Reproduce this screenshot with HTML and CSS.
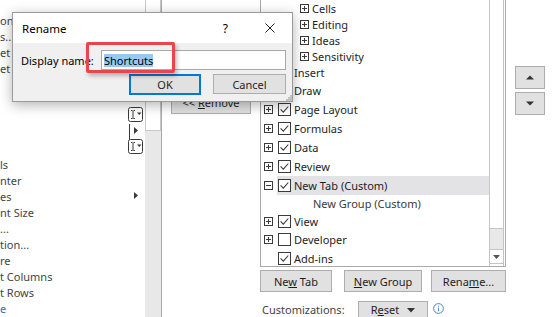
FILE: index.html
```html
<!DOCTYPE html>
<html lang="en">
<head>
  <meta charset="UTF-8">
  <meta name="viewport" content="width=device-width, initial-scale=1.0">
  <title>Customize the Ribbon - Rename</title>
  <link rel="stylesheet" href="styles.css">
</head>
<body>

  <svg class="defs" xmlns="http://www.w3.org/2000/svg">
    <symbol id="plus" viewBox="0 0 9 9">
      <rect x=".5" y=".5" width="8" height="8" fill="#fff" stroke="#3a3a3a"/>
      <path d="M2 4.5h5M4.5 2v5" stroke="#3a3a3a"/>
    </symbol>
    <symbol id="minus" viewBox="0 0 9 9">
      <rect x=".5" y=".5" width="8" height="8" fill="#fff" stroke="#3a3a3a"/>
      <path d="M2 4.5h5" stroke="#3a3a3a"/>
    </symbol>
    <symbol id="cb-on" viewBox="0 0 13 13">
      <rect x=".5" y=".5" width="12" height="12" fill="#fff" stroke="#3a3a3a"/>
      <path d="M2.6 6.4l2.7 2.8 5-5.7" fill="none" stroke="#3a3a3a" stroke-width="1.1"/>
    </symbol>
    <symbol id="cb-off" viewBox="0 0 13 13">
      <rect x=".5" y=".5" width="12" height="12" fill="#fff" stroke="#3a3a3a"/>
    </symbol>
    <symbol id="ibeam" viewBox="0 0 16 16">
      <rect x=".5" y=".5" width="14" height="14" rx="2" fill="#fff" stroke="#3a3a3a"/>
      <path d="M3 3.5h1.5M5.5 3.5H7M5 4v7.5M3 11.5h1.5M5.5 11.5H7" stroke="#3a3a3a"/>
      <path d="M9 5.5h4.5l-2.25 2.5z" fill="#3a3a3a"/>
    </symbol>
  </svg>

  <div class="panel">

    <section class="cmds">
      <ul class="cmd-list">
        <li class="cmd"></li>
        <li class="cmd">onf</li>
        <li class="cmd">s...</li>
        <li class="cmd">et C</li>
        <li class="cmd">et R</li>
        <li class="cmd"></li>
        <li class="cmd"></li>
        <li class="cmd"><span></span><svg class="cmd-ico up1" width="16" height="16"><use href="#ibeam"/></svg></li>
        <li class="cmd"><span></span>
          <svg class="cmd-ico" width="16" height="16" viewBox="0 0 16 16">
            <path d="M1.5 0v16" stroke="#3a3a3a"/>
            <path d="M6 3l4 3.5-4 3.5z" fill="#3a3a3a"/>
          </svg>
        </li>
        <li class="cmd"><span></span><svg class="cmd-ico up1" width="16" height="16"><use href="#ibeam"/></svg></li>
        <li class="cmd">ls</li>
        <li class="cmd">nter</li>
        <li class="cmd">es
          <svg class="cmd-ico" width="16" height="16" viewBox="0 0 16 16">
            <path d="M6 4l4 3.5-4 3.5z" fill="#3a3a3a"/>
          </svg>
        </li>
        <li class="cmd">nt Size</li>
        <li class="cmd">...</li>
        <li class="cmd">tion...</li>
        <li class="cmd">re</li>
        <li class="cmd">t Columns</li>
        <li class="cmd">t Rows</li>
        <li class="cmd link">e</li>
      </ul>
      <div class="vscroll"><div class="thumb"></div></div>
    </section>

    <section class="mid">
      <button class="btn remove">&lt;&lt; <u>R</u>emove</button>
    </section>

    <section class="tabs">
      <div class="tree">
        <ul class="tree-list">
          <li class="node lv2 h16"><svg class="exp"><use href="#plus"/></svg>Cells</li>
          <li class="node lv2 h16"><svg class="exp"><use href="#plus"/></svg>Editing</li>
          <li class="node lv2 h16"><svg class="exp"><use href="#plus"/></svg>Ideas</li>
          <li class="node lv2 h16"><svg class="exp"><use href="#plus"/></svg>Sensitivity</li>
          <li class="node lv1 h17"><svg class="exp"><use href="#plus"/></svg><svg class="cb"><use href="#cb-on"/></svg>Insert</li>
          <li class="node lv1"><svg class="exp"><use href="#plus"/></svg><svg class="cb"><use href="#cb-on"/></svg>Draw</li>
          <li class="node lv1"><svg class="exp"><use href="#plus"/></svg><svg class="cb"><use href="#cb-on"/></svg>Page Layout</li>
          <li class="node lv1"><svg class="exp"><use href="#plus"/></svg><svg class="cb"><use href="#cb-on"/></svg>Formulas</li>
          <li class="node lv1"><svg class="exp"><use href="#plus"/></svg><svg class="cb"><use href="#cb-on"/></svg>Data</li>
          <li class="node lv1"><svg class="exp"><use href="#plus"/></svg><svg class="cb"><use href="#cb-on"/></svg>Review</li>
          <li class="node lv1"><svg class="exp"><use href="#minus"/></svg><span class="sel"><svg class="cb"><use href="#cb-on"/></svg>New Tab (Custom)</span></li>
          <li class="node lv3 h17">New Group (Custom)</li>
          <li class="node lv1 h18"><svg class="exp"><use href="#plus"/></svg><svg class="cb"><use href="#cb-on"/></svg>View</li>
          <li class="node lv1"><svg class="exp"><use href="#plus"/></svg><svg class="cb"><use href="#cb-off"/></svg>Developer</li>
          <li class="node lv1 leaf"><svg class="cb"><use href="#cb-on"/></svg>Add-ins</li>
        </ul>
        <div class="tree-scroll">
          <div class="thumb"></div>
          <div class="track"></div>
          <div class="down">
            <svg width="7" height="4" viewBox="0 0 7 4"><path d="M0 0h7L3.5 4z" fill="#555"/></svg>
          </div>
        </div>
      </div>

      <div class="tree-btns">
        <button class="btn b-newtab">Ne<u>w</u> Tab</button>
        <button class="btn b-newgroup"><u>N</u>ew Group</button>
        <button class="btn b-rename">Rena<u>m</u>e...</button>
      </div>

      <div class="custom-row">
        <span class="custom-label">Customizations:</span>
        <button class="btn reset"><span>R<u>e</u>set</span>
          <svg width="8" height="5" viewBox="0 0 8 5"><path d="M0 0h8L4 4.5z" fill="#333"/></svg>
        </button>
        <svg class="info" width="11" height="11" viewBox="0 0 11 11">
          <circle cx="5.5" cy="5.5" r="4.9" fill="none" stroke="#4a86c8"/>
          <path d="M5.5 4.6v3.6" stroke="#4a86c8"/>
          <circle cx="5.5" cy="3.1" r=".6" fill="#4a86c8"/>
        </svg>
      </div>
    </section>

    <div class="updown">
      <button class="btn">
        <svg width="8" height="5" viewBox="0 0 8 5"><path d="M0 4.5L4 .5l4 4z" fill="#333"/></svg>
      </button>
      <button class="btn">
        <svg width="8" height="5" viewBox="0 0 8 5"><path d="M0 .5h8l-4 4z" fill="#333"/></svg>
      </button>
    </div>

  </div>

  <div class="rename">
    <div class="rename-title">
      <span>Rename</span>
      <span class="help">?</span>
      <svg class="close" width="10" height="10" viewBox="0 0 10 10">
        <path d="M.5.5l9 9M9.5.5l-9 9" stroke="#1e1e1e"/>
      </svg>
    </div>
    <div class="rename-body">
      <div class="name-row">
        <label class="name-label">Display name:</label>
        <div class="name-input"><span class="picked">Shortcuts</span></div>
      </div>
      <div class="rename-btns">
        <button class="btn ok">OK</button>
        <button class="btn cancel">Cancel</button>
      </div>
    </div>
    <svg class="grip" width="6" height="6" viewBox="0 0 6 6">
      <path d="M4 0h2v2H4zM2 2h2v2H2zM4 2h2v2H4zM0 4h2v2H0zM2 4h2v2H2zM4 4h2v2H4z" fill="#c2c2c2"/>
    </svg>
  </div>

  <div class="callout"></div>

</body>
</html>
```

FILE: styles.css
```css
* {
  box-sizing: border-box;
}
body {
  margin: 0;
  background-color: #fff;
  color: #1e1e1e;
  font-family: "Noto Sans", sans-serif;
  font-size: 11px;
  overflow: hidden;
}
.defs {
  display: none;
}
.panel {
  display: flex;
  align-items: flex-start;
  height: 317px;
}
.btn {
  font: inherit;
  color: #1e1e1e;
  background-color: #e1e1e1;
  border: 1px solid #adadad;
  padding: 0;
  height: 22px;
}
.btn svg {
  display: block;
}

/* left command list */
.cmds {
  display: flex;
  width: 162px;
  height: 321px;
  margin-top: -4px;
  border-right: 1px solid #a9a9a9;
}
.cmd-list {
  list-style: none;
  margin: 0;
  padding: 0;
  width: 145px;
  color: #444;
}
.cmd {
  height: 16px;
  display: flex;
  align-items: center;
  justify-content: space-between;
  padding-right: 1px;
  white-space: nowrap;
}
.cmd.link {
  color: #2a72b5;
}
.cmd-ico {
  display: block;
}
.cmd-ico.up1 {
  margin-top: -2px;
}
.vscroll {
  width: 16px;
  background-color: #e8e8e8;
}
.vscroll .thumb {
  height: 135px;
  background-color: #fff;
  border: 1px solid #c8c8c8;
  border-top: 0;
}

/* middle */
.mid {
  width: 98px;
  padding-top: 91px;
  padding-left: 9px;
}
.remove {
  width: 80px;
  height: 23px;
}

/* right tab tree */
.tabs {
  width: 246px;
}
.tree {
  display: flex;
  height: 268px;
  margin-top: -1px;
  border: 1px solid #a9a9a9;
}
.tree-list {
  flex: 1;
  list-style: none;
  margin: 0;
  padding: 0;
  min-width: 0;
}
.node {
  display: flex;
  align-items: center;
  height: 19px;
  white-space: nowrap;
}
.node.h16 { height: 16px; }
.node.h17 { height: 17px; }
.node.h18 { height: 18px; }
.lv1 { padding-left: 3px; }
.lv1.leaf { padding-left: 17px; }
.lv2 { padding-left: 39px; }
.lv3 { padding-left: 52px; color: #3a3a3a; }
.exp {
  width: 9px;
  height: 9px;
  flex: none;
  margin-right: 5px;
}
.lv2 .exp {
  margin-right: 3px;
}
.cb {
  width: 13px;
  height: 13px;
  flex: none;
  margin-right: 3px;
}
.sel {
  flex: 1;
  align-self: stretch;
  display: flex;
  align-items: center;
  margin-left: -1px;
  padding-left: 1px;
  background-color: #e3e3e6;
}
.tree-scroll {
  width: 15px;
  margin-right: 1px;
  display: flex;
  flex-direction: column;
  border-left: 1px solid #c4c4c4;
  border-right: 1px solid #c4c4c4;
}
.tree-scroll .thumb {
  height: 229px;
  border-bottom: 1px solid #c4c4c4;
}
.tree-scroll .track {
  flex: 1;
  background-color: #e8e8e8;
}
.tree-scroll .down {
  height: 15px;
  margin-bottom: 2px;
  border-top: 1px solid #c4c4c4;
  border-bottom: 1px solid #c4c4c4;
  display: flex;
  align-items: center;
  justify-content: center;
}
.tree-btns {
  display: flex;
  margin-top: 3px;
}
.b-newtab { width: 72px; }
.b-newgroup { width: 78px; margin-left: 12px; }
.b-rename { width: 75px; margin-left: 9px; }
.custom-row {
  display: flex;
  align-items: flex-start;
  margin-top: 9px;
}
.custom-label {
  width: 98px;
  padding-left: 2px;
  margin-top: 1px;
  line-height: 15px;
  color: #444;
}
.reset {
  width: 70px;
  display: flex;
  justify-content: center;
  align-items: flex-start;
  gap: 8px;
  line-height: 15px;
}
.reset svg {
  margin-top: 6px;
}
.info {
  margin-left: 5px;
  margin-top: 2px;
}

/* move up / down */
.updown {
  margin-left: 9px;
  padding-top: 66px;
  display: flex;
  flex-direction: column;
  gap: 3px;
}
.updown .btn {
  width: 30px;
  height: 23px;
  display: flex;
  align-items: center;
  justify-content: center;
}

/* rename dialog */
.rename {
  position: absolute;
  left: 12px;
  top: 12px;
  width: 281px;
  height: 90px;
  display: flex;
  flex-direction: column;
  background-color: #f0f0f0;
  border: 1px solid #9a9a9a;
  box-shadow: 0 3px 12px rgba(0, 0, 0, 0.3);
}
.rename-title {
  height: 30px;
  display: flex;
  align-items: center;
  padding: 0 17px 0 9px;
  background-color: #fff;
  font-size: 11.5px;
  color: #000;
}
.help {
  margin-left: auto;
  margin-right: 37px;
  font-size: 12px;
}
.rename-body {
  padding: 7px 6px 0 8px;
}
.name-row {
  display: flex;
  align-items: center;
}
.name-label {
  width: 80px;
  color: #000;
}
.name-input {
  width: 185px;
  height: 20px;
  padding-left: 2px;
  display: flex;
  align-items: center;
  background-color: #fff;
  border: 1px solid #a9a9a9;
}
.picked {
  line-height: 13px;
  background-color: #99c9ef;
  color: #000;
}
.rename-btns {
  display: flex;
  justify-content: flex-end;
  gap: 12px;
  margin-top: 4px;
}
.ok {
  width: 72px;
  height: 21px;
  border: 2px solid #0078d7;
}
.cancel {
  width: 73px;
  height: 20px;
}
.grip {
  margin-top: auto;
  align-self: flex-end;
}

/* red highlight around the field */
.callout {
  position: absolute;
  left: 86px;
  top: 42px;
  width: 89px;
  height: 31px;
  border: 3px solid #e8464c;
  border-radius: 2px;
  box-shadow: 2px 3px 4px rgba(0, 0, 0, 0.25);
}
```
